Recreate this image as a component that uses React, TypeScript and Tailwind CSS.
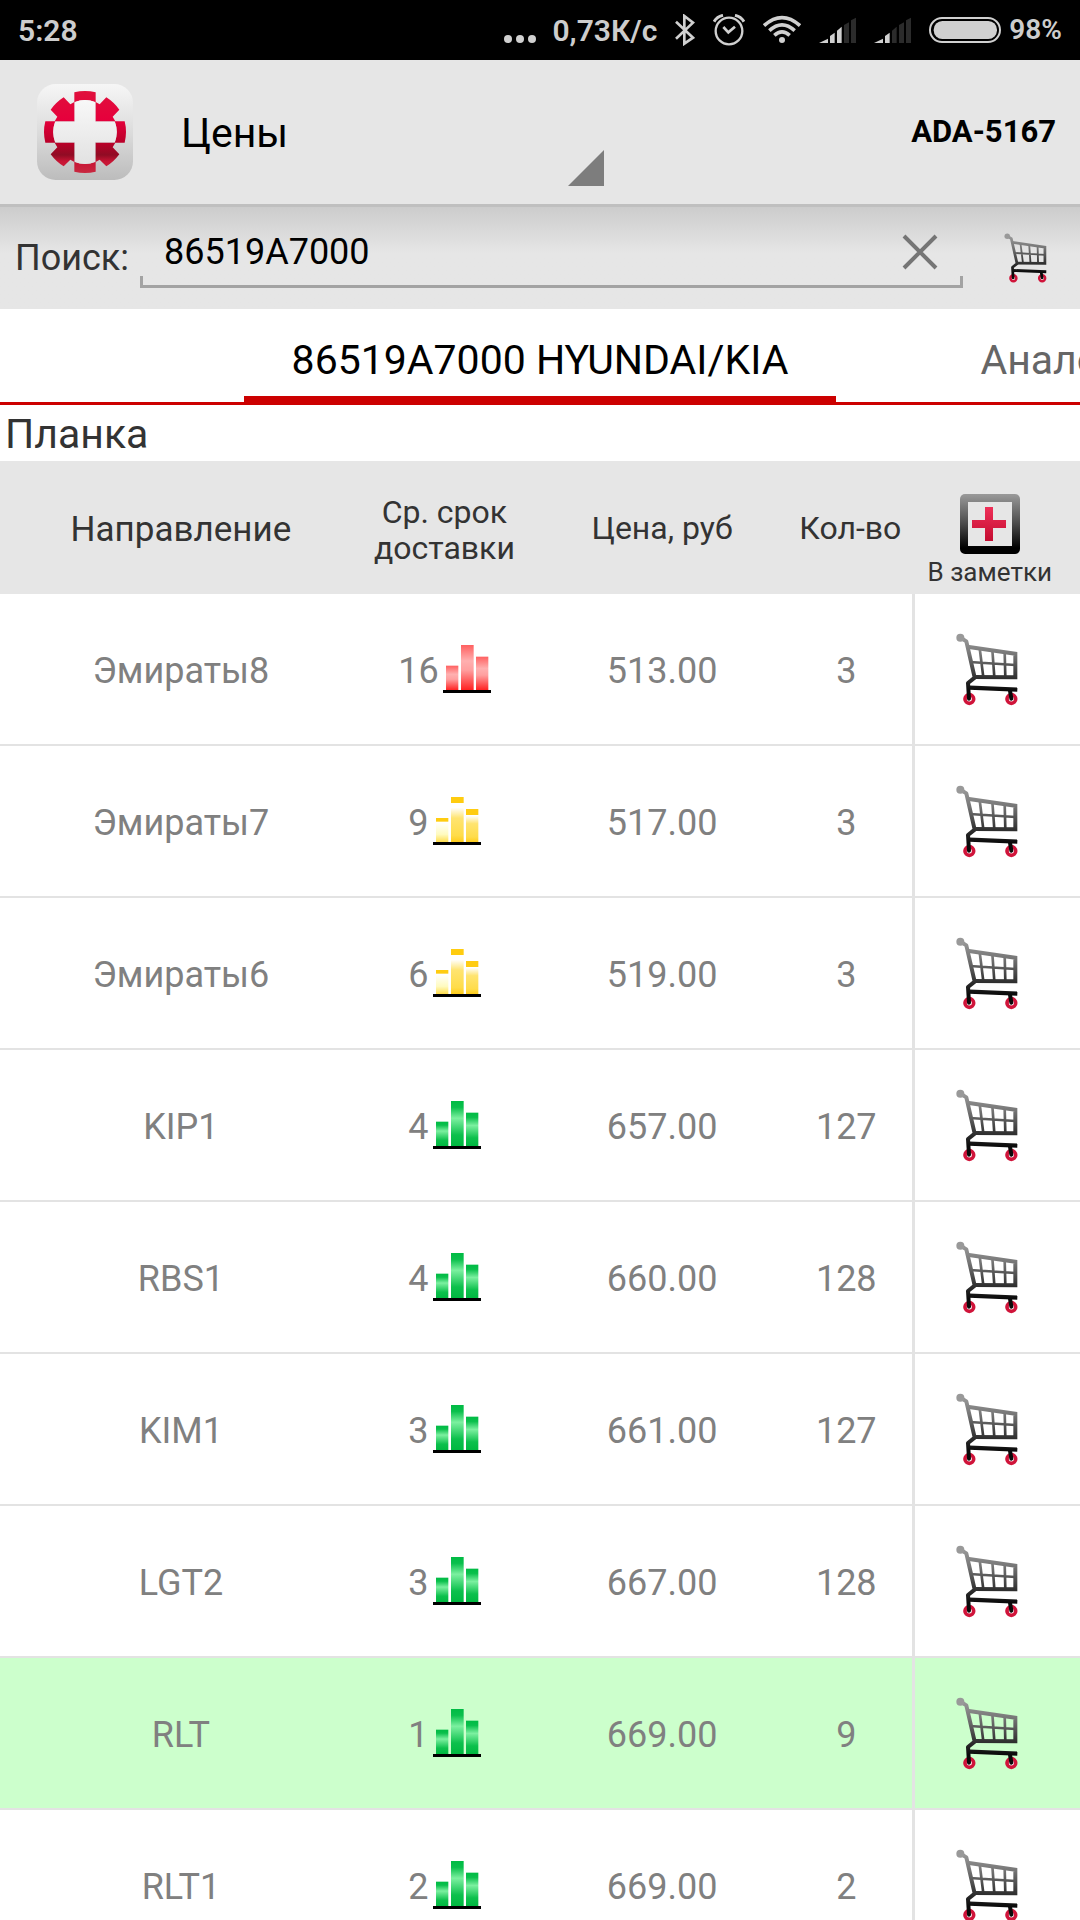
import React, { useState } from "react";

type Speed = "slow" | "medium" | "fast";

interface Offer {
  direction: string;
  days: number;
  speed: Speed;
  price: string;
  qty: number;
  highlighted?: boolean;
}

const offers: Offer[] = [
  { direction: "Эмираты8", days: 16, speed: "slow", price: "513.00", qty: 3 },
  { direction: "Эмираты7", days: 9, speed: "medium", price: "517.00", qty: 3 },
  { direction: "Эмираты6", days: 6, speed: "medium", price: "519.00", qty: 3 },
  { direction: "KIP1", days: 4, speed: "fast", price: "657.00", qty: 127 },
  { direction: "RBS1", days: 4, speed: "fast", price: "660.00", qty: 128 },
  { direction: "KIM1", days: 3, speed: "fast", price: "661.00", qty: 127 },
  { direction: "LGT2", days: 3, speed: "fast", price: "667.00", qty: 128 },
  { direction: "RLT", days: 1, speed: "fast", price: "669.00", qty: 9, highlighted: true },
  { direction: "RLT1", days: 2, speed: "fast", price: "669.00", qty: 2 },
];

// Gradients shared by all icons
function IconDefs() {
  return (
    <svg className="absolute h-0 w-0" aria-hidden="true">
      <defs>
        <linearGradient id="cart" gradientUnits="userSpaceOnUse" x1="0" y1="70" x2="0" y2="240">
          <stop offset="0" stopColor="#a0a0a0" />
          <stop offset="0.35" stopColor="#777777" />
          <stop offset="1" stopColor="#0a0a0a" />
        </linearGradient>
        <linearGradient id="slow" x1="0" y1="0" x2="0" y2="1">
          <stop offset="0" stopColor="#ff6060" />
          <stop offset="0.35" stopColor="#ffb0b0" />
          <stop offset="0.55" stopColor="#ffa0a0" />
          <stop offset="1" stopColor="#ff2020" />
        </linearGradient>
        <linearGradient id="fast" x1="0" y1="0" x2="0" y2="1">
          <stop offset="0" stopColor="#00bb44" />
          <stop offset="0.14" stopColor="#0abf4c" />
          <stop offset="0.38" stopColor="#7cf0a0" />
          <stop offset="0.75" stopColor="#0cc04c" />
          <stop offset="1" stopColor="#00b840" />
        </linearGradient>
        <linearGradient id="medium" x1="0" y1="0" x2="0" y2="1">
          <stop offset="0" stopColor="#ffffff" />
          <stop offset="0.3" stopColor="#ffe470" />
          <stop offset="0.8" stopColor="#ffdc4a" />
          <stop offset="1" stopColor="#ffcc1a" />
        </linearGradient>
        <linearGradient id="mediumLow" x1="0" y1="0" x2="0" y2="1">
          <stop offset="0" stopColor="#ffffff" />
          <stop offset="0.6" stopColor="#fffbc0" />
          <stop offset="1" stopColor="#ffdc4a" />
        </linearGradient>
        <linearGradient id="logoBg" x1="0" y1="0" x2="0" y2="1">
          <stop offset="0" stopColor="#f6f6f6" />
          <stop offset="0.5" stopColor="#dcdcdc" />
          <stop offset="1" stopColor="#bcbcbc" />
        </linearGradient>
        <linearGradient id="logoCross" x1="0" y1="0" x2="0" y2="1">
          <stop offset="0" stopColor="#f8f8f8" />
          <stop offset="1" stopColor="#e2e2e2" />
        </linearGradient>
        <linearGradient id="logoRed" gradientUnits="userSpaceOnUse" x1="0" y1="273" x2="0" y2="519">
          <stop offset="0" stopColor="#e0103c" />
          <stop offset="0.35" stopColor="#e6003c" />
          <stop offset="0.64" stopColor="#b80028" />
          <stop offset="0.78" stopColor="#900c24" />
          <stop offset="0.86" stopColor="#c81434" />
          <stop offset="1" stopColor="#c82840" />
        </linearGradient>
        <linearGradient id="noteFrame" x1="0" y1="0" x2="0" y2="1">
          <stop offset="0" stopColor="#9a9a9a" />
          <stop offset="0.5" stopColor="#4a4a4a" />
          <stop offset="0.9" stopColor="#000000" />
        </linearGradient>
        <linearGradient id="notePlus" x1="0" y1="0" x2="0" y2="1">
          <stop offset="0" stopColor="#ee3058" />
          <stop offset="1" stopColor="#c40c30" />
        </linearGradient>
      </defs>
    </svg>
  );
}

function CartIcon({ className }: { className: string }) {
  return (
    <svg viewBox="78 67 186 219" className={className} aria-hidden="true">
      <g fill="#fff" stroke="#d0143a" strokeWidth="11">
        <circle cx="118" cy="265" r="13" />
        <circle cx="244" cy="265" r="13" />
      </g>
      <g fill="none" stroke="url(#cart)">
        <path d="M95 83 L109 92 L134 201 L114 217 L117 264" strokeWidth="12" strokeLinejoin="round" strokeLinecap="round" />
        <path d="M112 108 L256 129 L256 200 L130 199" strokeWidth="12" />
        <path d="M120 154 L256 163 M149 112 L160 200 M187 117 L193 200 M224 123 L226 200" strokeWidth="8" />
        <path d="M118 231 L262 237" strokeWidth="13" />
        <path d="M240 240 L244 264" strokeWidth="12" strokeLinecap="round" />
      </g>
      <circle cx="91" cy="81" r="12" fill="#999" />
    </svg>
  );
}

function BarsIcon({ speed }: { speed: Speed }) {
  return (
    <svg viewBox="0 0 144 144" className="h-12 w-12" aria-hidden="true">
      {speed === "slow" && (
        <g fill="url(#slow)">
          <rect x="9" y="62" width="37" height="74" />
          <rect x="54" y="0" width="38" height="136" />
          <rect x="99" y="35" width="37" height="101" />
        </g>
      )}
      {speed === "fast" && (
        <g fill="url(#fast)">
          <rect x="9" y="62" width="37" height="74" />
          <rect x="54" y="0" width="38" height="136" />
          <rect x="99" y="35" width="37" height="101" />
        </g>
      )}
      {speed === "medium" && (
        <>
          <g fill="#ffcc10">
            <rect x="9" y="63" width="37" height="11" />
            <rect x="54" y="0" width="38" height="18" />
            <rect x="99" y="36" width="37" height="18" />
          </g>
          <rect x="9" y="76" width="37" height="60" fill="url(#mediumLow)" />
          <rect x="54" y="32" width="38" height="104" fill="url(#medium)" />
          <rect x="99" y="56" width="37" height="80" fill="url(#medium)" />
        </>
      )}
      <rect x="0" y="135" width="144" height="9" fill="#000" />
    </svg>
  );
}

function LogoIcon() {
  return (
    <svg viewBox="111 252 288 288" className="h-24 w-24" aria-hidden="true">
      <rect x="111" y="252" width="288" height="288" rx="56" fill="url(#logoBg)" />
      <g fill="url(#logoRed)">
        <path d="M223 277 Q255 269 287 277 V307 Q255 293 223 307 Z" />
        <path d="M223 515 Q255 523 287 515 V485 Q255 499 223 485 Z" />
        <path d="M136 364 Q128 396 136 428 H166 Q154 396 166 364 Z" />
        <path d="M374 364 Q382 396 374 428 H344 Q356 396 344 364 Z" />
        <path d="M223 364 H164 L172 350 L152 329 Q169 306 191 292 L211 313 L223 306 Z" />
        <path d="M287 364 H346 L338 350 L358 329 Q341 306 319 292 L299 313 L287 306 Z" />
        <path d="M223 428 H164 L172 442 L152 463 Q169 486 191 499 L211 479 L223 486 Z" />
        <path d="M287 428 H346 L338 442 L358 463 Q341 486 319 499 L299 479 L287 486 Z" />
      </g>
      <path
        d="M225 306 Q255 294 285 306 V366 H345 Q356 396 345 426 H285 V486 Q255 498 225 486 V426 H165 Q154 396 165 366 H225 Z"
        fill="url(#logoCross)"
      />
    </svg>
  );
}

function NoteIcon() {
  return (
    <svg viewBox="0 0 60 60" className="h-[60px] w-[60px]" aria-hidden="true">
      <rect x="0" y="0" width="60" height="60" rx="5" fill="url(#noteFrame)" />
      <rect x="8" y="8" width="44" height="44" fill="#e6e6e6" />
      <path d="M25 13 H33 V26 H46 V34 H33 V47 H25 V34 H12 V26 H25 Z" fill="url(#notePlus)" />
    </svg>
  );
}

function SignalIcon({ level }: { level: number }) {
  const bars = [
    "M0 114 L27 101 V114 Z",
    "M33 114 V93 L47 83 V114 Z",
    "M54 114 V77 L68 65 V114 Z",
    "M75 114 V60 L90 52 V114 Z",
    "M96 114 V46 L111 38 V114 Z",
  ];
  return (
    <svg viewBox="0 27 111 96" className="h-8 w-[37px]" aria-hidden="true">
      {bars.map((d, i) => (
        <path key={d} d={d} fill={i < level ? "#d0d0d0" : "#2b2b2b"} />
      ))}
    </svg>
  );
}

function StatusBar() {
  return (
    <div className="flex h-[60px] shrink-0 items-center justify-between bg-black px-[18px] text-[30px] font-semibold text-[#cdcdcd]">
      <span>5:28</span>
      <div className="flex items-center gap-[18px]">
        <div className="flex items-center gap-4">
          <svg viewBox="0 0 32 32" className="h-8 w-8" fill="#d0d0d0" aria-hidden="true">
            <circle cx="4" cy="25" r="4" />
            <circle cx="16" cy="25" r="4" />
            <circle cx="28" cy="25" r="4" />
          </svg>
          <span>0,73К/с</span>
        </div>
        <svg viewBox="51 27 60 96" className="h-8 w-5" fill="none" stroke="#d0d0d0" strokeWidth="8" aria-hidden="true">
          <path d="M54 50 L105 98 L79 116 V33 L105 53 L54 101" />
        </svg>
        <svg viewBox="165 27 96 96" className="h-8 w-8" fill="none" stroke="#d0d0d0" strokeWidth="7" aria-hidden="true">
          <circle cx="213" cy="78" r="40" />
          <path d="M196 66 L211 82 L231 65" strokeWidth="8" />
          <path d="M168 50 Q177 35 195 31 M258 50 Q249 35 231 31" strokeWidth="9" />
        </svg>
        <svg viewBox="315 27 114 96" className="h-8 w-[38px]" fill="none" stroke="#d0d0d0" strokeWidth="11" aria-hidden="true">
          <path d="M318 62 Q372 14 426 62" />
          <path d="M334 77 Q372 42 410 77" />
          <path d="M349 91 Q372 70 395 91" />
          <circle cx="372" cy="105" r="9" fill="#d0d0d0" stroke="none" />
        </svg>
        <SignalIcon level={3} />
        <SignalIcon level={2} />
        <div className="flex items-center gap-2">
          <svg viewBox="804 27 216 96" className="h-8 w-[72px]" aria-hidden="true">
            <rect x="807" y="39" width="210" height="72" rx="36" fill="none" stroke="#d0d0d0" strokeWidth="6" />
            <rect x="818" y="48" width="190" height="54" rx="26" fill="#d0d0d0" />
          </svg>
          <span className="text-[28px]">98%</span>
        </div>
      </div>
    </div>
  );
}

export default function App() {
  const [query, setQuery] = useState("86519A7000");

  return (
    <div className="relative flex h-screen flex-col overflow-hidden bg-white font-['Roboto','Noto_Sans',sans-serif] text-[#333333]">
      <IconDefs />
      <StatusBar />

      {/* Action bar */}
      <header className="flex h-36 shrink-0 items-center bg-[#e6e6e6] pr-6 pl-[37px] text-black">
        <LogoIcon />
        <button className="ml-12 flex h-full w-[423px] items-center justify-between text-[41px]">
          <span className="pt-1">Цены</span>
          <svg viewBox="0 0 36 36" className="mb-[18px] h-9 w-9 self-end" aria-hidden="true">
            <path d="M0 36 L36 0 V36 Z" fill="#7d7d7d" />
          </svg>
        </button>
        <span className="ml-auto text-[31px] font-bold">ADA-5167</span>
      </header>

      {/* Search */}
      <div className="flex h-[105px] shrink-0 items-center border-t-[3px] border-[#bfbfbf] bg-linear-to-b from-[#cccccc] to-[#e6e6e6] to-45% pr-[33px] pl-[15px]">
        <label htmlFor="search" className="w-[125px] text-[36px]">
          Поиск:
        </label>
        <div className="flex flex-1 flex-col">
          <div className="flex h-12 items-center pr-[25px] pl-6">
            <input
              id="search"
              value={query}
              onChange={(e) => setQuery(e.target.value)}
              className="min-w-0 flex-1 bg-transparent text-[36px] text-black outline-none"
            />
            <button aria-label="Очистить" onClick={() => setQuery("")}>
              <svg viewBox="0 0 36 36" className="h-9 w-9" stroke="#757575" strokeWidth="4" aria-hidden="true">
                <path d="M2 2 L34 34 M34 2 L2 34" />
              </svg>
            </button>
          </div>
          <div className="h-3 border-x-[3px] border-b-[3px] border-[#a3a3a3]" />
        </div>
        <button aria-label="Корзина" className="ml-[41px]">
          <CartIcon className="h-[50px] w-[43px]" />
        </button>
      </div>

      {/* Tabs */}
      <nav className="flex h-24 shrink-0 overflow-hidden border-b-[3px] border-[#cc0000] text-[41px]">
        <div className="flex-1" />
        <button className="border-b-[6px] border-[#cc0000] px-12 pt-4 text-black">86519A7000 HYUNDAI/KIA</button>
        <div className="flex flex-1 overflow-hidden pb-[6px]">
          <button className="pt-4 pl-36 text-[#666666]">Аналоги</button>
        </div>
      </nav>

      <h1 className="flex h-14 shrink-0 items-center pt-1 pl-[5px] text-[41px]">Планка</h1>

      <table className="w-full table-fixed border-separate border-spacing-0 text-center">
        <colgroup>
          <col className="w-[33.5%]" />
          <col className="w-[15.3%]" />
          <col className="w-[25%]" />
          <col className="w-[10.6%]" />
          <col className="w-[15.6%]" />
        </colgroup>
        <thead>
          <tr className="h-[133px] bg-[#e6e6e6] text-[32px] leading-9">
            <th className="pt-1 text-[35px] font-normal">Направление</th>
            <th className="pt-1 font-normal">
              Ср. срок
              <br />
              доставки
            </th>
            <th className="font-normal">Цена, руб</th>
            <th className="pr-2 font-normal whitespace-nowrap">Кол-во</th>
            <th className="pr-3 text-[26px] font-normal">
              <button className="inline-flex flex-col items-center pt-7">
                <NoteIcon />
                В заметки
              </button>
            </th>
          </tr>
        </thead>
        <tbody>
          {offers.map((offer) => (
            <tr
              key={offer.direction}
              className={`h-[152px] text-[36px] text-[#808080] ${offer.highlighted ? "bg-[#ccffcc]" : "bg-white"}`}
            >
              <td className="border-b-2 border-[#e3e3e3] pt-1">{offer.direction}</td>
              <td className="border-b-2 border-[#e3e3e3]">
                <div className="flex items-center justify-center gap-1">
                  <span className="pt-1">{offer.days}</span>
                  <BarsIcon speed={offer.speed} />
                </div>
              </td>
              <td className="border-b-2 border-[#e3e3e3] pt-1">{offer.price}</td>
              <td className="border-b-2 border-[#e3e3e3] pt-1 pr-4">{offer.qty}</td>
              <td className="border-b-2 border-l-[3px] border-[#e3e3e3] pr-5">
                <button aria-label="В корзину" className="mx-auto block">
                  <CartIcon className="h-[73px] w-[62px]" />
                </button>
              </td>
            </tr>
          ))}
        </tbody>
      </table>
    </div>
  );
}
